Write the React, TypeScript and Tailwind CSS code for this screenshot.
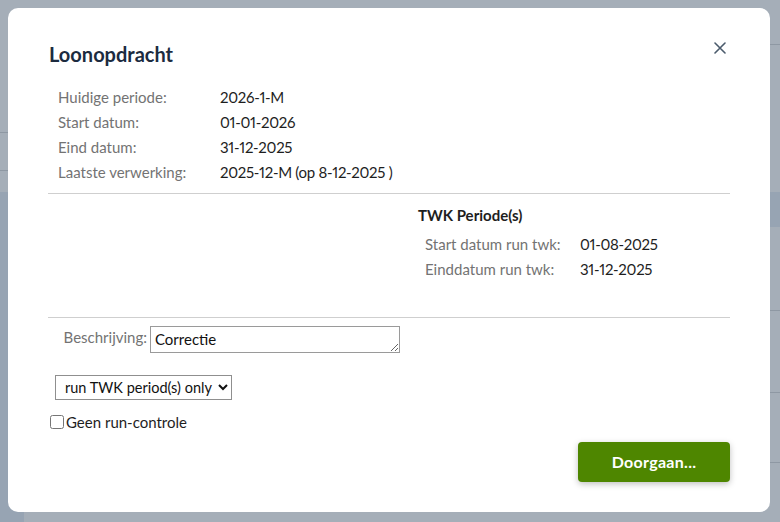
import React from 'react';

/**
 * Loonopdracht dialog over a dimmed page
 */

const periodRows: [string, string][] = [
  ['Huidige periode:', '2026-1-M'],
  ['Start datum:', '01-01-2026'],
  ['Eind datum:', '31-12-2025'],
  ['Laatste verwerking:', '2025-12-M (op 8-12-2025 )'],
];

const twkRows: [string, string][] = [
  ['Start datum run twk:', '01-08-2025'],
  ['Einddatum run twk:', '31-12-2025'],
];

function XIcon() {
  return (
    <svg width="12" height="12" viewBox="0 0 12 12" fill="none" stroke="#4b5b6c" strokeWidth="1.6" strokeLinecap="round">
      <path d="M1 1l10 10M11 1L1 11" />
    </svg>
  );
}

export default function App() {
  return (
    <div
      className="relative w-[780px] h-[522px] overflow-hidden bg-[#a5aeb8] proportional-nums"
      style={{ fontFamily: 'Lato, "Noto Sans", sans-serif' }}
    >
      {/* Dimmed page behind the dialog */}
      <div className="flex h-full">
        <div className="w-[24px] flex flex-col">
          <div className="h-[133px] border-b border-[#8e98a3]" />
          <div className="h-[38px] border-b border-[#8e98a3] flex items-center text-[15px] text-[#2b3a4e] justify-end">rk</div>
          <div className="h-[21px]" />
          <div className="flex-1 bg-[#97a4b3]" />
        </div>
        <div className="flex-1 flex flex-col">
          <div className="h-[45px] border-b border-[#8e98a3]" />
          <div className="h-[147px]" />
          <div className="h-[35px] bg-[#97a4b3]" />
          <div className="h-[84px] border-b border-[#8e98a3]" />
          <div className="h-[82px] border-b border-[#8e98a3]" />
          <div className="h-[70px] border-b border-[#8e98a3]" />
          <div className="pl-[6px] pt-[10px] text-[15px] text-[#2b3a4e]">Ende 2025-1-M</div>
        </div>
      </div>

      {/* Dialog */}
      <div className="absolute left-[8px] top-[8px] w-[762px] h-[504px] bg-white rounded-[10px] px-[40px] pt-[32px] flex flex-col">
        <div className="flex items-start justify-between">
          <h1 className="text-[20px] font-bold text-[#1c2b3f] leading-[28px] pl-[1px]">Loonopdracht</h1>
          <button className="mt-[2px] mr-[4px]">
            <XIcon />
          </button>
        </div>

        <div className="mt-[17px] pl-[10px] grid grid-cols-[162px_auto] auto-rows-[25px] items-center text-[15px]">
          {periodRows.map(([label, value]) => (
            <React.Fragment key={label}>
              <span className="text-[#737373]">{label}</span>
              <span className="text-[#1e1e1e] tracking-[-0.3px]">{value}</span>
            </React.Fragment>
          ))}
        </div>

        <div className="mt-[8px] border-t border-[#cfcfcf]" />

        <div className="h-[123px] pl-[370px] pt-[10px]">
          <h2 className="text-[15px] font-bold text-[#1e1e1e] leading-[22px]">TWK Periode(s)</h2>
          <div className="mt-[6px] pl-[7px] grid grid-cols-[155px_auto] auto-rows-[25px] items-center text-[15px]">
            {twkRows.map(([label, value]) => (
              <React.Fragment key={label}>
                <span className="text-[#737373]">{label}</span>
                <span className="text-[#1e1e1e] tracking-[-0.3px]">{value}</span>
              </React.Fragment>
            ))}
          </div>
        </div>

        <div className="border-t border-[#cfcfcf]" />

        <div className="mt-[8px] flex items-start gap-[3px] text-[15px]">
          <label className="w-[99px] text-right text-[#737373] leading-[22px]">Beschrijving:</label>
          <textarea
            rows={1}
            defaultValue="Correctie"
            className="w-[250px] h-[27px] border border-[#9a9a9a] px-[4px] py-[1px] leading-[22px] text-[#111]"
          />
        </div>

        <div className="mt-[22px] pl-[7px]">
          <select className="h-[25px] border border-[#8f8f8f] text-[14.5px] text-[#111] pl-[5px] pr-[2px]">
            <option>run TWK period(s) only</option>
          </select>
        </div>

        <label className="mt-[12px] flex items-center text-[15px] text-[#1e1e1e] leading-[20px]">
          <input type="checkbox" className="m-0 ml-[2px] w-[14px] h-[14px]" />
          <span className="ml-[2px]">Geen run-controle</span>
        </label>

        <div className="mt-[10px] flex justify-end">
          <button className="w-[152px] h-[40px] rounded-[4px] bg-[#4e8600] text-white text-[16px] font-bold tracking-[0.3px] shadow-[0_2px_6px_rgba(0,0,0,0.25)]">
            Doorgaan...
          </button>
        </div>
      </div>
    </div>
  );
}
